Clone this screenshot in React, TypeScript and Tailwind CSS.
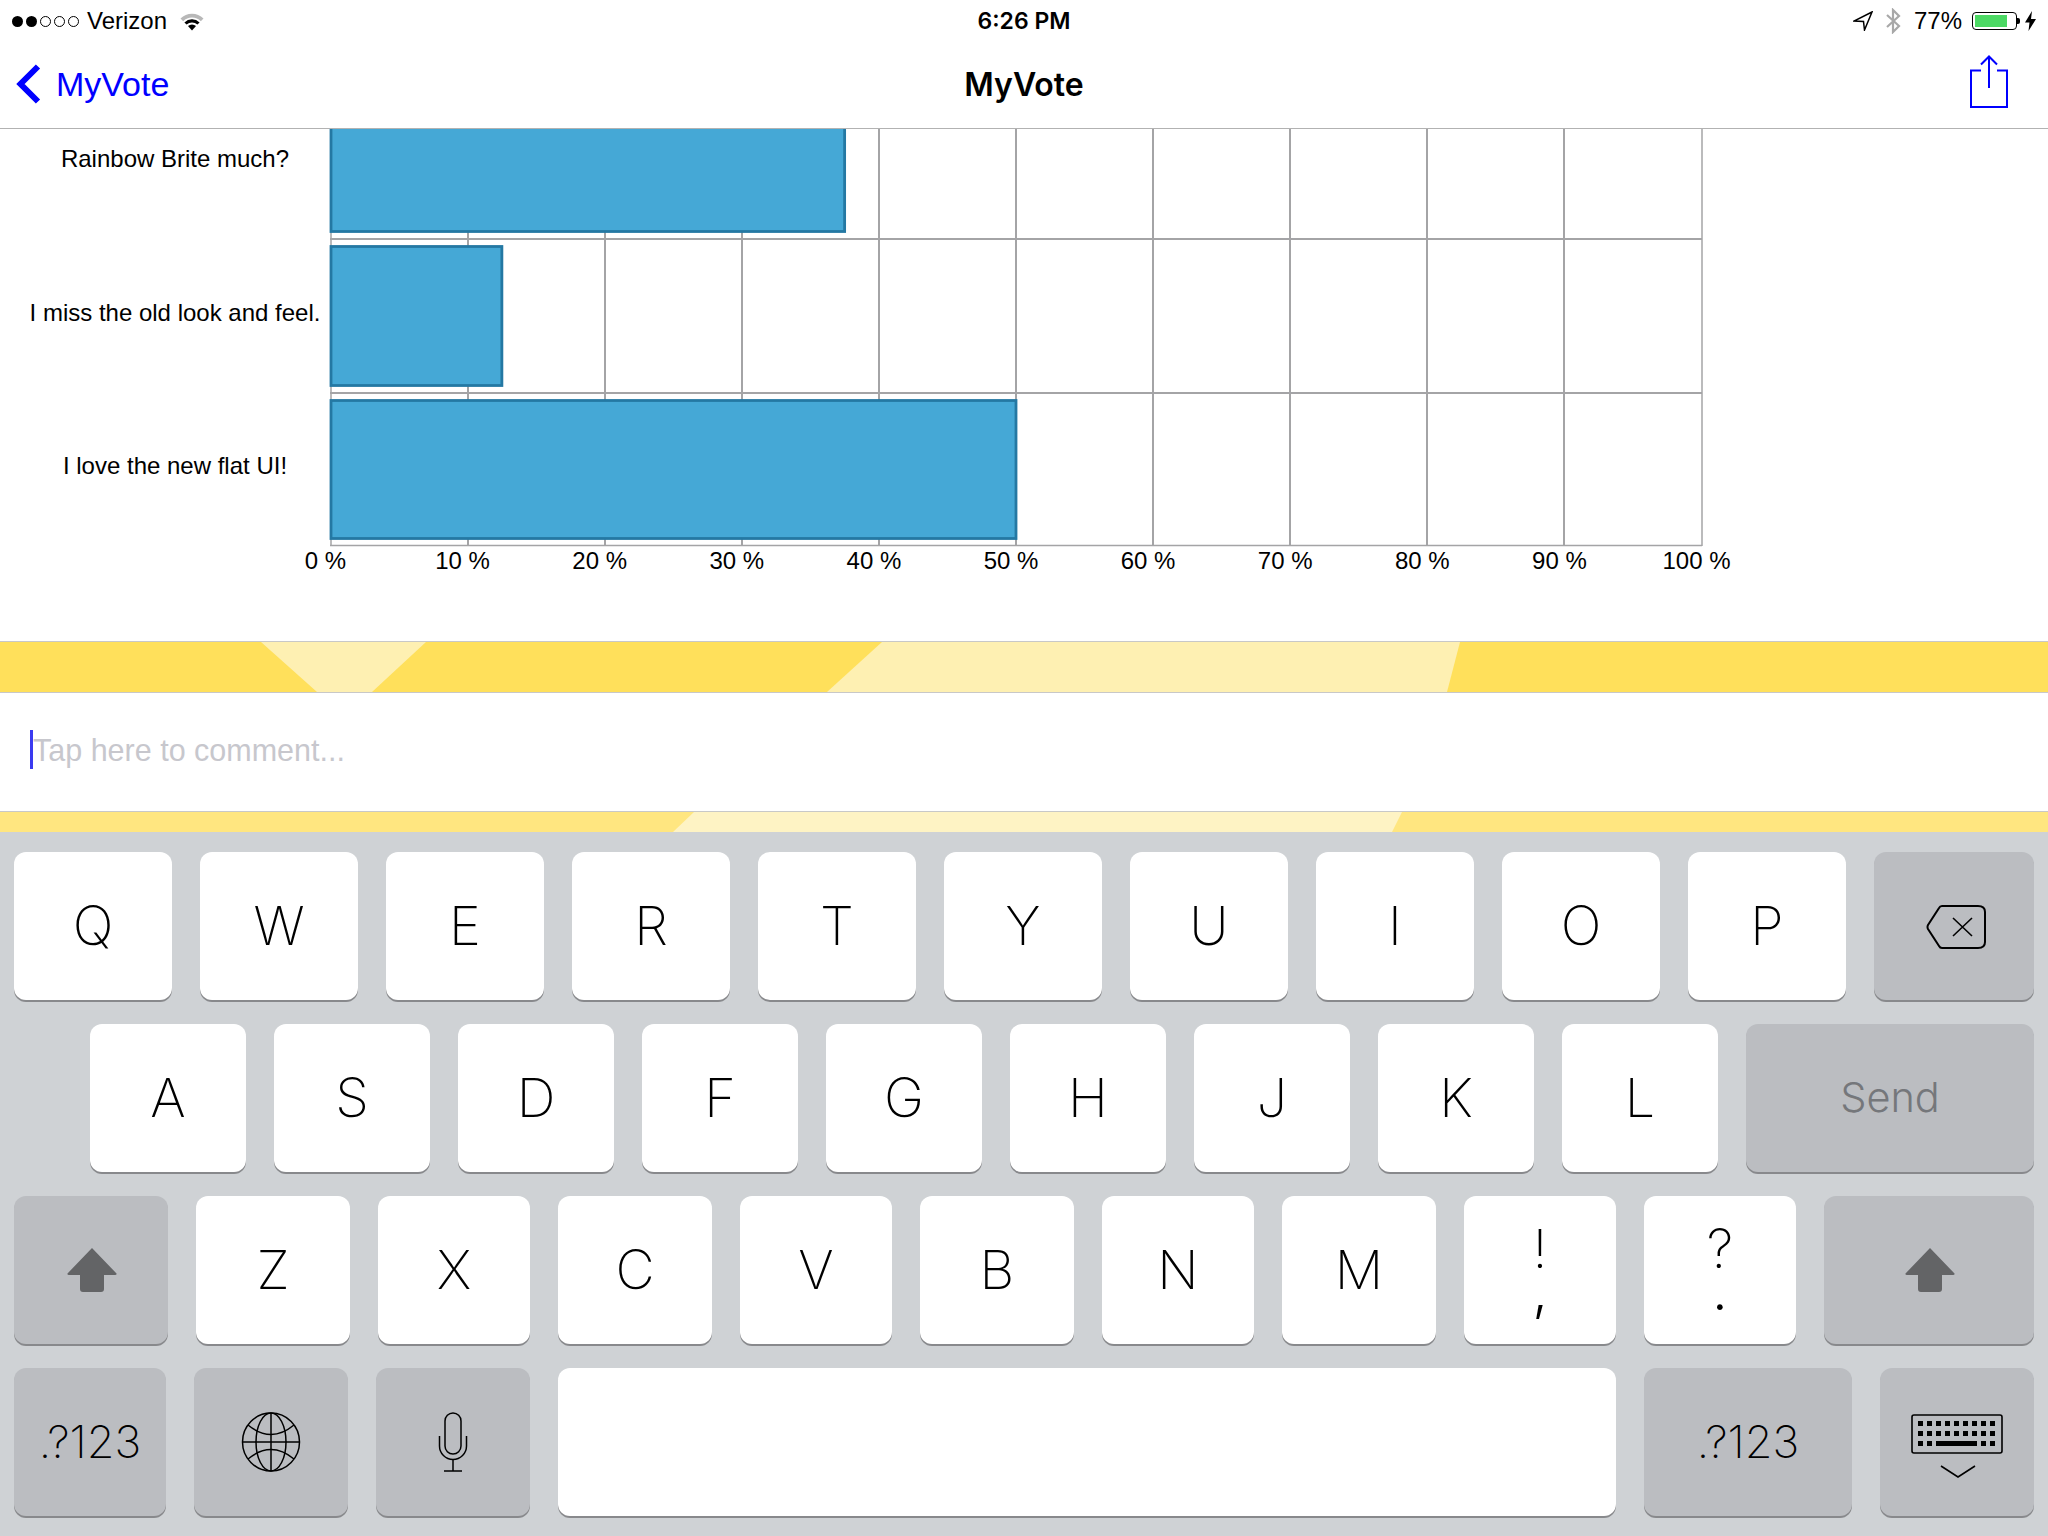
import React from "react";

const LIBERATION = "font-['Liberation_Sans',Arial,sans-serif]";

function Wifi() {
  return (
    <svg width="26" height="20" viewBox="0 0 26 20" className="ml-[12px]">
      <path d="M1.5 7.5 A16.5 16.5 0 0 1 24.5 7.5 L21.8 10.2 A12.5 12.5 0 0 0 4.2 10.2 Z" fill="#b8b8b8" />
      <path d="M5.4 11.4 A11 11 0 0 1 20.6 11.4 L18.4 13.6 A8 8 0 0 0 7.6 13.6 Z" fill="#000" />
      <path d="M9 15 A6 6 0 0 1 17 15 L13 19.4 Z" fill="#000" />
    </svg>
  );
}

function SignalDots() {
  return (
    <div className="flex items-center gap-[3px]">
      {[0, 1].map((i) => (
        <span key={i} className="block h-[11px] w-[11px] rounded-full bg-black" />
      ))}
      {[2, 3, 4].map((i) => (
        <span key={i} className="block h-[11px] w-[11px] rounded-full border border-black bg-white" />
      ))}
    </div>
  );
}

function StatusBar() {
  return (
    <div className={`grid h-[42px] grid-cols-3 items-center pl-[12px] pr-[12px] text-[24px] text-black ${LIBERATION}`}>
      <div className="flex items-center">
        <SignalDots />
        <span className="ml-[8px]">Verizon</span>
        <Wifi />
      </div>
      <div className="text-center font-['Inter',sans-serif] text-[23px] font-semibold">6:26 PM</div>
      <div className="flex items-center justify-end">
        <svg width="20" height="20" viewBox="0 0 20 20">
          <path d="M19 1 L1 10 L10.5 10.5 L11.5 19 Z" fill="none" stroke="#000" strokeWidth="1.5" strokeLinejoin="miter" />
        </svg>
        <svg width="16" height="26" viewBox="0 0 16 26" className="ml-[12px]">
          <path d="M2 7 L14 18 L8 24 L8 2 L14 8 L2 19" fill="none" stroke="#a8a8a8" strokeWidth="2.2" />
        </svg>
        <span className="ml-[13px]">77%</span>
        <div className="ml-[10px] flex items-center">
          <div className="h-[18px] w-[45px] rounded-[4px] border border-black p-[2px]">
            <div className="h-full w-[32px] bg-[#4cd964]" />
          </div>
          <div className="h-[6px] w-[3px] rounded-r-[2px] bg-black" />
        </div>
        <svg width="11" height="20" viewBox="0 0 11 20" className="ml-[5px]">
          <path d="M7 0 L0 11.5 L4.5 11.5 L3.5 20 L11 8 L6 8 Z" fill="#000" />
        </svg>
      </div>
    </div>
  );
}

function NavBar() {
  return (
    <div className={`relative flex h-[87px] items-center justify-between border-b border-[#b2b2b2] pb-[2px] pl-[16px] pr-[40px] ${LIBERATION}`}>
      <div className="flex items-center">
        <svg width="25" height="40" viewBox="0 0 25 40">
          <path d="M22 2.5 L4.5 20 L22 37.5" fill="none" stroke="#0000ff" strokeWidth="6" />
        </svg>
        <span className="ml-[15px] text-[34px] text-[#0000ff]">MyVote</span>
      </div>
      <div className="absolute inset-x-0 mt-[2px] text-center font-['Inter',sans-serif] text-[32px] font-semibold text-black">MyVote</div>
      <svg width="38" height="54" viewBox="0 0 38 54" className="mt-[-4px]">
        <path d="M11 15.5 L1 15.5 L1 52 L37 52 L37 15.5 L27 15.5" fill="none" stroke="#0000ff" strokeWidth="2" />
        <path d="M19 1.5 L19 33 M11 9.5 L19 1.5 L27 9.5" fill="none" stroke="#0000ff" strokeWidth="2" />
      </svg>
    </div>
  );
}

const TICKS = [0, 10, 20, 30, 40, 50, 60, 70, 80, 90, 100];

function Chart() {
  const x = (p: number) => 330.5 + p * 13.71;
  const gx = (p: number) => Math.round(x(p));
  return (
    <svg width="2048" height="512" viewBox="0 129 2048 512" className={`block ${LIBERATION}`}>
      {TICKS.map((t) => (
        <line key={t} x1={gx(t)} x2={gx(t)} y1={129} y2={546} stroke="#a4a4a6" strokeWidth={t === 0 || t === 100 ? 1.5 : 2} />
      ))}
      <line x1={330} x2={1702} y1={239} y2={239} stroke="#a4a4a6" strokeWidth="2" />
      <line x1={330} x2={1702} y1={393} y2={393} stroke="#a4a4a6" strokeWidth="2" />
      <line x1={330} x2={1702} y1={545.5} y2={545.5} stroke="#a4a4a6" strokeWidth="1.5" />
      <rect x="331" y="127" width={x(37.5) - 331} height="104.5" fill="#45a8d6" stroke="#2478a3" strokeWidth="2.8" />
      <rect x="331" y="246.5" width={x(12.5) - 331} height="139" fill="#45a8d6" stroke="#2478a3" strokeWidth="2.8" />
      <rect x="331" y="400.5" width={x(50) - 331} height="138" fill="#45a8d6" stroke="#2478a3" strokeWidth="2.8" />
      <text x="175" y="167" textAnchor="middle" fontSize="24" fill="#000">Rainbow Brite much?</text>
      <text x="175" y="321" textAnchor="middle" fontSize="24" fill="#000">I miss the old look and feel.</text>
      <text x="175" y="474" textAnchor="middle" fontSize="24" fill="#000">I love the new flat UI!</text>
      {TICKS.map((t) => (
        <text key={t} x={x(t) - 5} y="569" textAnchor="middle" fontSize="24" fill="#000">{`${t} %`}</text>
      ))}
    </svg>
  );
}

function CommentArea() {
  return (
    <div>
      <div className="h-[52px] border-y border-[#c8c8c8] bg-[#ffe05b]">
        <svg width="2048" height="50" viewBox="0 642 2048 50" className="block">
          <polygon points="261,642 426,642 372,692 317,692" fill="#fef0b2" />
          <polygon points="882,642 1460,642 1447,692 827,692" fill="#fef0b2" />
        </svg>
      </div>
      <div className="flex h-[118px] items-center bg-white pb-[5px] pl-[30px]">
        <div className="h-[39px] w-[3px] bg-[#3a3af0]" />
        <span className={`mt-[3px] text-[30.5px] text-[#c7c7cd] ${LIBERATION}`}>Tap here to comment...</span>
      </div>
      <div className="h-[21px] border-t border-[#c8c8c8] bg-[#ffe680]">
        <svg width="2048" height="20" viewBox="0 812 2048 20" className="block">
          <polygon points="694,812 1402,812 1392,832 673,832" fill="#fef3c4" />
        </svg>
      </div>
    </div>
  );
}

type KeyProps = { w: number; dark?: boolean; children?: React.ReactNode };

function Key({ w, dark, children }: KeyProps) {
  return (
    <div
      style={{ width: w }}
      className={`flex h-[148px] shrink-0 items-center justify-center rounded-[12px] font-['Inter',sans-serif] font-[250] text-black shadow-[0_2px_0_#88898c] ${
        dark ? "bg-[#bbbdc1]" : "bg-white"
      }`}
    >
      {children}
    </div>
  );
}

const Letter = ({ w, c }: { w: number; c: string }) => (
  <Key w={w}>
    <span className="text-[54px] leading-none">{c}</span>
  </Key>
);

const Stacked = ({ w, a, b }: { w: number; a: string; b: string }) => (
  <Key w={w}>
    <div className="flex flex-col items-center text-[54px] leading-[42px]">
      <span className="block h-[42px]">{a}</span>
      <span className="block h-[42px] font-light">{b}</span>
    </div>
  </Key>
);

function Shift() {
  return (
    <svg width="50" height="44" viewBox="0 0 50 44" className="ml-[2px]">
      <path
        d="M25 0 L49.5 25.5 Q50 27 48 27 L37 27 L37 41 Q37 44 34 44 L16 44 Q13 44 13 41 L13 27 L2 27 Q0 27 0.5 25.5 Z"
        fill="#636466"
      />
    </svg>
  );
}

function Backspace() {
  return (
    <svg width="60" height="44" viewBox="0 0 60 44" className="ml-[3px] mt-[2px]">
      <path
        d="M16 1 L52 1 Q59 1 59 7 L59 37 Q59 43 52 43 L16 43 Q14 43 13 41 L2 24 Q1 22 2 20 L13 3 Q14 1 16 1 Z"
        fill="none"
        stroke="#000"
        strokeWidth="2"
      />
      <path d="M27 13 L46 31 M46 13 L27 31" stroke="#000" strokeWidth="1.6" />
    </svg>
  );
}

function Globe() {
  return (
    <svg width="60" height="60" viewBox="0 0 60 60" fill="none" stroke="#000" strokeWidth="1.5">
      <ellipse cx="30" cy="30" rx="28.5" ry="29" />
      <ellipse cx="30" cy="30" rx="15" ry="29" />
      <path d="M30 1 L30 59 M1.5 30 L58.5 30" />
      <path d="M7 13 Q30 32 53 13" />
      <path d="M7 47 Q30 28 53 47" />
    </svg>
  );
}

function Mic() {
  return (
    <svg width="30" height="60" viewBox="0 0 30 60" fill="none" stroke="#000" strokeWidth="1.5">
      <rect x="7" y="1" width="16" height="41" rx="8" />
      <path d="M1.5 24 L1.5 34 A13.5 13.5 0 0 0 28.5 34 L28.5 24" />
      <path d="M15 48 L15 59 M6 59 L24 59" />
    </svg>
  );
}

function KeyboardIcon() {
  const row = (y: number, n: number) =>
    Array.from({ length: n }).map((_, i) => <rect key={`${y}-${i}`} x={7 + i * 9} y={y} width="5" height="5" fill="#000" />);
  return (
    <svg width="92" height="66" viewBox="0 0 92 66">
      <rect x="1" y="1" width="90" height="38" rx="2" fill="none" stroke="#000" strokeWidth="1.6" />
      {row(7, 9)}
      {row(17, 9)}
      <rect x="7" y="27" width="5" height="5" fill="#000" />
      <rect x="16" y="27" width="5" height="5" fill="#000" />
      <rect x="25" y="27" width="41" height="5" fill="#000" />
      <rect x="70" y="27" width="5" height="5" fill="#000" />
      <rect x="79" y="27" width="5" height="5" fill="#000" />
      <path d="M30 52 L47 63 L64 52" fill="none" stroke="#000" strokeWidth="1.6" />
    </svg>
  );
}

const RowOne = ["Q", "W", "E", "R", "T", "Y", "U", "I", "O", "P"];
const RowTwo = ["A", "S", "D", "F", "G", "H", "J", "K", "L"];
const RowThree: [string, number][] = [
  ["Z", 154],
  ["X", 152],
  ["C", 154],
  ["V", 152],
  ["B", 154],
  ["N", 152],
  ["M", 154],
];

function Keyboard() {
  return (
    <div className="flex h-[704px] flex-col gap-[24px] bg-[#cfd2d5] pl-[14px] pr-[14px] pt-[20px]">
      <div className="flex gap-[28px]">
        {RowOne.map((c) => (
          <Letter key={c} w={158} c={c} />
        ))}
        <Key w={160} dark>
          <Backspace />
        </Key>
      </div>
      <div className="flex gap-[28px] pl-[76px]">
        {RowTwo.map((c) => (
          <Letter key={c} w={156} c={c} />
        ))}
        <Key w={288} dark>
          <span className="mb-[2px] text-[41.5px] font-light text-[#75777b]">Send</span>
        </Key>
      </div>
      <div className="flex gap-[28px]">
        <Key w={154} dark>
          <Shift />
        </Key>
        {RowThree.map(([c, w]) => (
          <Letter key={c} w={w} c={c} />
        ))}
        <Stacked w={152} a="!" b="," />
        <Stacked w={152} a="?" b="." />
        <Key w={210} dark>
          <Shift />
        </Key>
      </div>
      <div className="flex gap-[28px]">
        <Key w={152} dark>
          <span className="text-[45px]">.?123</span>
        </Key>
        <Key w={154} dark>
          <Globe />
        </Key>
        <Key w={154} dark>
          <Mic />
        </Key>
        <Key w={1058} />
        <Key w={208} dark>
          <span className="text-[45px]">.?123</span>
        </Key>
        <Key w={154} dark>
          <div className="pt-[10px]">
            <KeyboardIcon />
          </div>
        </Key>
      </div>
    </div>
  );
}

export default function App() {
  return (
    <div className="h-[1536px] w-[2048px] overflow-hidden bg-white">
      <StatusBar />
      <NavBar />
      <Chart />
      <CommentArea />
      <Keyboard />
    </div>
  );
}
